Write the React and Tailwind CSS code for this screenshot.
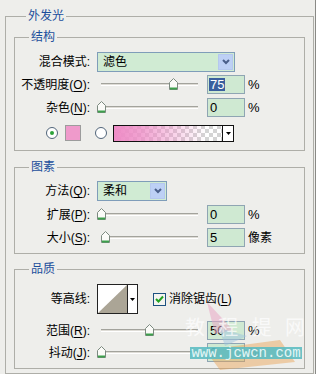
const font = "font-['Liberation_Sans','Noto_Sans_CJK_SC',sans-serif]";

function Label({ text, hot, suffix = "" }) {
  return (
    <div className="w-[78px] shrink-0 pr-[3px] text-right text-[12px] leading-[16px] text-black whitespace-nowrap">
      {text}
      {hot && (
        <>
          (<span className="underline underline-offset-2">{hot}</span>)
        </>
      )}
      :{suffix}
    </div>
  );
}

function Thumb() {
  return (
    <svg width="9" height="12" viewBox="0 0 9 12">
      <path d="M4.5 0.5 L8.5 4.5 V11.5 H0.5 V4.5 Z" fill="#fbfbf8" stroke="#7c8a80" />
      <path d="M1 10.5 H8" stroke="#3da04c" strokeWidth="2" />
    </svg>
  );
}

function Slider({ value }) {
  return (
    <div className="relative ml-[4px] h-[19px] w-[106px] shrink-0">
      <div className="absolute left-[4px] top-[8px] h-[3px] w-[97px] border-t border-b border-t-[#a3a39c] border-b-white bg-[#dedcd6]" />
      <div className="absolute top-[3px]" style={{ left: `${4 + (value / 100) * 97 - 4.5}px` }}>
        <Thumb />
      </div>
    </div>
  );
}

function NumBox({ value, selected }) {
  return (
    <div className="ml-[4px] flex h-[19px] w-[38px] shrink-0 items-center border border-[#8fa5b3] bg-[#cfe9d2] pl-[1px] text-[13px] leading-[13px]">
      {selected ? (
        <span className="bg-[#3a5f9e] px-[1px] py-[0px] text-white">{value}</span>
      ) : (
        <span className="pl-[1px] text-black">{value}</span>
      )}
    </div>
  );
}

function SliderRow({ label, hot, value, pos, unit, selected, className }) {
  return (
    <div className={"flex h-[19px] items-center " + className}>
      <Label text={label} hot={hot} />
      <Slider value={pos} />
      <NumBox value={value} selected={selected} />
      <span className={unit === "%" ? "ml-[3px] text-[13px]" : "ml-[3px] text-[12px]"}>{unit}</span>
    </div>
  );
}

function Combo({ value, width }) {
  return (
    <div className={"ml-[4px] flex h-[20px] shrink-0 items-stretch border border-[#7f9db9] bg-[#d0ebd3] " + width}>
      <div className="flex flex-1 items-center pl-[5px] text-[12px] text-black">{value}</div>
      <div className="m-[1px] flex w-[15px] items-center justify-center border border-[#b5c8ee] bg-[#bdd0f5]">
        <svg width="8" height="6" viewBox="0 0 8 6">
          <path d="M1 1 L4 4 L7 1" fill="none" stroke="#4a5f8a" strokeWidth="2" />
        </svg>
      </div>
    </div>
  );
}

function Radio({ checked }) {
  return (
    <div className="flex h-[12px] w-[12px] shrink-0 items-center justify-center rounded-full border border-[#51657a] bg-white">
      {checked && <div className="h-[4px] w-[4px] rounded-full bg-[#2ea33a]" />}
    </div>
  );
}

function Group({ title, children, className }) {
  return (
    <fieldset className={"border border-[#aeaea8] " + className}>
      <legend className="ml-[14px] px-[2px] text-[12px] leading-[16px] text-[#1c4f9c]">{title}</legend>
      {children}
    </fieldset>
  );
}

export default function App() {
  return (
    <div className={"relative h-[374px] w-[316px] overflow-hidden border-r border-[#8a8a86] bg-[#eeeeeb] pl-[5px] pt-[8px] " + font}>
      <fieldset className="w-[308px] border border-[#aeaea8] px-[8px] pb-[4px]">
        <legend className="ml-[12px] px-[2px] text-[12px] leading-[16px] text-[#1c4f9c]">外发光</legend>

        <Group title="结构" className="mt-[5px] w-[291px] pb-[9px]">
          <div className="mt-[7px] flex h-[20px] items-center">
            <Label text="混合模式" />
            <Combo value="滤色" width="w-[138px]" />
          </div>
          <SliderRow className="mt-[3px]" label="不透明度" hot="O" value="75" pos={75} unit="%" selected />
          <SliderRow className="mt-[4px]" label="杂色" hot="N" value="0" pos={0} unit="%" />
          <div className="mt-[8px] flex h-[16px] items-center pl-[31px]">
            <Radio checked />
            <div className="ml-[7px] h-[16px] w-[16px] border border-[#9c9c9c] bg-[#ef9acb]" />
            <div className="ml-[14px]">
              <Radio />
            </div>
            <div className="ml-[6px] flex h-[17px]">
              <svg width="110" height="17" viewBox="0 0 110 17">
                <defs>
                  <pattern id="chk" width="8" height="8" patternUnits="userSpaceOnUse">
                    <rect width="8" height="8" fill="#ffffff" />
                    <rect width="4" height="4" fill="#d4d4d4" />
                    <rect x="4" y="4" width="4" height="4" fill="#d4d4d4" />
                  </pattern>
                  <linearGradient id="pk" x1="0" x2="1" y1="0" y2="0">
                    <stop offset="0" stopColor="#ee8cc6" stopOpacity="1" />
                    <stop offset="0.25" stopColor="#ee8cc6" stopOpacity="0.8" />
                    <stop offset="0.85" stopColor="#ee8cc6" stopOpacity="0" />
                  </linearGradient>
                </defs>
                <rect x="0.5" y="0.5" width="109" height="16" fill="url(#chk)" />
                <rect x="0.5" y="0.5" width="109" height="16" fill="url(#pk)" stroke="#111" />
              </svg>
              <div className="flex h-[17px] w-[11px] items-center justify-center border border-l-0 border-[#111] bg-white">
                <svg width="5" height="3" viewBox="0 0 5 3">
                  <path d="M0 0 H5 L2.5 3 Z" fill="#000" />
                </svg>
              </div>
            </div>
          </div>
        </Group>

        <Group title="图素" className="mt-[8px] w-[291px] pb-[6px]">
          <div className="mt-[6px] flex h-[20px] items-center">
            <Label text="方法" hot="Q" />
            <Combo value="柔和" width="w-[70px]" />
          </div>
          <SliderRow className="mt-[4px]" label="扩展" hot="P" value="0" pos={0} unit="%" />
          <SliderRow className="mt-[4px]" label="大小" hot="S" value="5" pos={5} unit="像素" />
        </Group>

        <Group title="品质" className="mt-[7px] w-[291px] pb-[6px]">
          <div className="mt-[7px] flex h-[30px] items-center">
            <Label text="等高线" />
            <div className="ml-[4px] flex h-[30px]">
              <div className="h-[30px] w-[31px] border border-[#222] bg-white">
                <svg width="29" height="28" viewBox="0 0 29 28" className="block">
                  <polygon points="0,28 29,0 29,28" fill="#aba596" />
                </svg>
              </div>
              <div className="flex h-[30px] w-[10px] items-center justify-center border border-l-0 border-[#222] bg-white">
                <svg width="5" height="3" viewBox="0 0 5 3">
                  <path d="M0 0 H5 L2.5 3 Z" fill="#000" />
                </svg>
              </div>
            </div>
            <div className="ml-[15px] flex h-[13px] w-[13px] items-center justify-center border border-[#1c5180] bg-[#f4f4f0]">
              <svg width="9" height="8" viewBox="0 0 9 8">
                <path d="M1 4 L3.5 6.5 L8 1.5" fill="none" stroke="#21a121" strokeWidth="2" />
              </svg>
            </div>
            <span className="ml-[3px] text-[12px] leading-[16px] text-black">
              消除锯齿(<span className="underline underline-offset-2">L</span>)
            </span>
          </div>
          <SliderRow className="mt-[7px]" label="范围" hot="R" value="50" pos={50} unit="%" />
          <SliderRow className="mt-[3px]" label="抖动" hot="J" value="0" pos={0} unit="%" />
        </Group>
      </fieldset>

      <div className="pointer-events-none absolute left-[185px] top-[300px] h-[74px] w-[125px]">
        <svg width="125" height="74" viewBox="0 0 125 74" className="absolute left-0 top-0">
          <polygon points="22,2 48,30 30,34" fill="#e9a8c4" opacity="0.55" />
          <polygon points="34,28 62,36 40,46" fill="#9ec3dd" opacity="0.5" />
          <polygon points="20,50 95,40 110,62 35,70" fill="#e8a050" opacity="0.45" />
        </svg>
        <div className="absolute left-[0px] top-[17px] flex w-[120px] justify-between text-[20px] leading-[22px] text-white opacity-70">
          <span>教</span>
          <span>程</span>
          <span>提</span>
          <span>网</span>
        </div>
        <div className="absolute left-[5px] top-[47px] flex h-[12px] w-[112px] items-center justify-center bg-[#5dbcc2]/90 font-['Liberation_Mono',monospace] text-[14px] leading-[12px] text-[#e4f6f6]">
          www.jcwcn.com
        </div>
      </div>
    </div>
  );
}
